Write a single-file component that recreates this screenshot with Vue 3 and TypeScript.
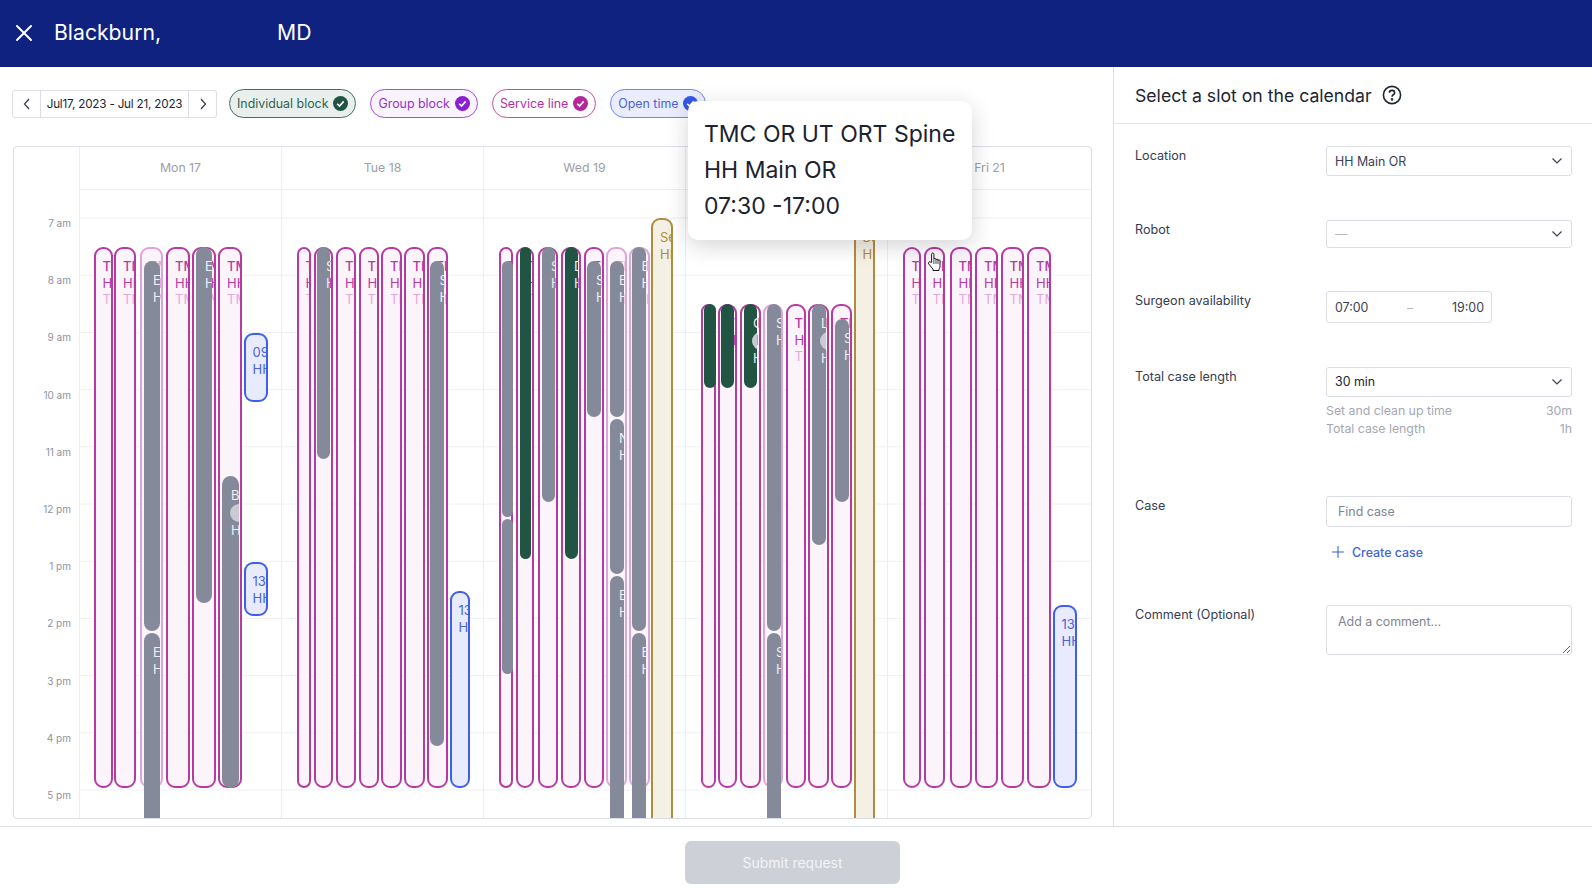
<script setup lang="ts">
type Kind = 'pink' | 'faded' | 'grey' | 'green' | 'blue' | 'tan'

interface CalEvent {
  kind: Kind
  x0: number
  x1: number
  y0: number
  y1: number
  lines: string[]
  avatar?: boolean
}

const TOP = 247
const END = 788
const BOTTOM = 830
const THU = 304
const BODY_Y = 217

const block = ['TMC OR UT ORT Spine', 'HH Main OR', 'TMC OR']

const pink = (x0: number, x1: number, y0 = TOP, kind: Kind = 'pink'): CalEvent => ({ kind, x0, x1, y0, y1: END, lines: block })
const faded = (x0: number, x1: number, y0 = TOP) => pink(x0, x1, y0, 'faded')
const grey = (name: string, x0: number, x1: number, y0: number, y1: number, avatar = false): CalEvent => ({
  kind: 'grey', x0, x1, y0, y1, lines: name ? [name, 'HH Main OR'] : [], avatar,
})
const green = (name: string, x0: number, x1: number, y0: number, y1: number, avatar = false): CalEvent => ({
  kind: 'green', x0, x1, y0, y1, lines: name ? [name, 'HH Main OR'] : [], avatar,
})
const blue = (x0: number, x1: number, y0: number, y1: number, time: string): CalEvent => ({ kind: 'blue', x0, x1, y0, y1, lines: [time, 'HH Main OR'] })
const tan = (x0: number, x1: number): CalEvent => ({ kind: 'tan', x0, x1, y0: 218, y1: BOTTOM, lines: ['Service line', 'HH Main OR'] })

const days: { label: string; x: number; events: CalEvent[] }[] = [
  {
    label: 'Mon 17',
    x: 79,
    events: [
      pink(93.5, 112.5), pink(114, 136), faded(140, 163), pink(166, 189.5), pink(192, 215.5), pink(218, 242),
      grey('Evans', 143.5, 160, 261, 631), grey('Evans', 143.5, 160, 633, BOTTOM), grey('Evans', 195.5, 212, TOP, 603), grey('Blackburn', 221.5, 238.5, 476, END, true),
      blue(243.5, 268, 333, 402, '09:00'), blue(243.5, 268, 562, 616, '13:00'),
    ],
  },
  {
    label: 'Tue 18',
    x: 281,
    events: [
      pink(296.5, 311), pink(313.5, 332.5), pink(336, 356), pink(358.5, 379), pink(381, 401.5), pink(403.5, 424.5), pink(426.5, 447.5),
      grey('Smith', 316.5, 329.5, TOP, 459), grey('Smith', 430, 444, 261, 746),
      blue(449.5, 470, 591, END, '13:00'),
    ],
  },
  {
    label: 'Wed 19',
    x: 483,
    events: [
      pink(498.5, 513), pink(516, 534), pink(538, 558), pink(561, 581), pink(583.5, 604), faded(606, 626.5), faded(628.5, 649.5),
      grey('', 501.5, 513, 261, 517), grey('', 501.5, 513, 519, 674),
      green('', 519.5, 531, TOP, 559), grey('Smith', 541.5, 555, TOP, 502), green('Davis', 564.5, 578, TOP, 559),
      grey('Smith', 586.5, 601, 261, 417), grey('Evans', 609.5, 623.5, 261, 417), grey('Nolan', 609.5, 623.5, 419, 574), grey('Evans', 609.5, 623.5, 576, BOTTOM),
      grey('Evans', 632, 646, TOP, 631), grey('Evans', 632, 646, 633, BOTTOM),
      tan(651, 672.5),
    ],
  },
  {
    label: 'Thu 20',
    x: 685,
    events: [
      pink(700.5, 715.5, THU), pink(717.5, 736.5, THU), pink(740, 760.5, THU), faded(763, 783, THU), pink(785.5, 806, THU), pink(808, 829, THU), pink(831, 852, THU),
      green('', 704, 715.5, THU, 388), green('', 721, 733.5, THU, 388), green('Carter', 743.5, 757, THU, 388, true),
      grey('Smith', 766.5, 780.5, THU, 631), grey('Smith', 766.5, 780.5, 633, BOTTOM), grey('Lee', 811.5, 826, THU, 545, true), grey('Smith', 834.5, 848.5, 319, 502),
      tan(853.5, 875),
    ],
  },
  {
    label: 'Fri 21',
    x: 887,
    events: [
      pink(902.5, 921), pink(923.5, 945), pink(949.5, 972), pink(975, 998), pink(1000.5, 1024), pink(1027, 1051),
      blue(1052.5, 1077, 605, END, '13:00'),
    ],
  },
]

const hours = ['7 am', '8 am', '9 am', '10 am', '11 am', '12 pm', '1 pm', '2 pm', '3 pm', '4 pm', '5 pm']

const filters = [
  { label: 'Individual block', cls: 'individual' },
  { label: 'Group block', cls: 'group' },
  { label: 'Service line', cls: 'service' },
  { label: 'Open time', cls: 'open' },
]

const eventStyle = (ev: CalEvent, dayX: number) => ({
  left: `${ev.x0 - dayX}px`,
  width: `${ev.x1 - ev.x0}px`,
  top: `${ev.y0 - BODY_Y}px`,
  height: `${ev.y1 - ev.y0}px`,
})
</script>

<template>
  <div class="app">
    <header class="topbar">
      <svg class="close" width="18" height="18" viewBox="0 0 18 18" fill="none" stroke="#fff" stroke-width="2" stroke-linecap="round">
        <path d="M2 2l14 14M16 2L2 16" />
      </svg>
      <span class="name">Blackburn,</span>
      <span class="name degree">MD</span>
    </header>

    <div class="main">
      <section class="left">
        <div class="toolbar">
          <div class="datenav">
            <button class="navbtn">
              <svg width="8" height="12" viewBox="0 0 8 12" fill="none" stroke="#3b4154" stroke-width="1.3"><path d="M6 1L1.5 6 6 11" /></svg>
            </button>
            <span class="range">Jul17, 2023 - Jul 21, 2023</span>
            <button class="navbtn">
              <svg width="8" height="12" viewBox="0 0 8 12" fill="none" stroke="#3b4154" stroke-width="1.3"><path d="M2 1l4.5 5L2 11" /></svg>
            </button>
          </div>
          <div v-for="f in filters" :key="f.label" class="pill" :class="f.cls">
            <span>{{ f.label }}</span>
            <svg class="check" width="15" height="15" viewBox="0 0 15 15">
              <circle cx="7.5" cy="7.5" r="7.5" fill="currentColor" />
              <path d="M4.2 7.7l2.3 2.3 4.2-4.6" fill="none" stroke="#fff" stroke-width="1.6" />
            </svg>
          </div>
        </div>

        <div class="calendar">
          <div class="cal-head">
            <div class="gutter"></div>
            <div v-for="d in days" :key="d.label" class="day-title">{{ d.label }}</div>
          </div>
          <div class="cal-allday">
            <div class="gutter"></div>
            <div v-for="d in days" :key="d.label" class="allday-cell"></div>
          </div>
          <div class="cal-body">
            <div class="times">
              <div v-for="h in hours" :key="h" class="time">{{ h }}</div>
            </div>
            <div v-for="d in days" :key="d.label" class="day">
              <div v-for="(ev, i) in d.events" :key="i" class="event" :class="ev.kind" :style="eventStyle(ev, d.x)">
                <div v-for="(line, n) in ev.lines" :key="n">
                  <span v-if="ev.avatar && n === 1" class="avatar"></span>
                  <span class="line">{{ line }}</span>
                </div>
              </div>
            </div>
          </div>
        </div>
      </section>

      <aside class="panel">
        <div class="panel-head">
          <h2>Select a slot on the calendar</h2>
          <svg width="20" height="20" viewBox="0 0 20 20" fill="none" stroke="#1d2433" stroke-width="1.6">
            <circle cx="10" cy="10" r="8.6" />
            <path d="M7.4 7.8c0-1.5 1.2-2.4 2.6-2.4s2.6.9 2.6 2.3c0 2.1-2.6 2-2.6 4" />
            <circle cx="10" cy="14.4" r=".5" fill="#1d2433" />
          </svg>
        </div>
        <div class="form">
          <div class="field">
            <label>Location</label>
            <div class="control select">
              <span>HH Main OR</span>
              <svg width="12" height="8" viewBox="0 0 12 8" fill="none" stroke="#3b4154" stroke-width="1.2"><path d="M1.5 1.5L6 6l4.5-4.5" /></svg>
            </div>
          </div>
          <div class="field">
            <label>Robot</label>
            <div class="control select robot">
              <span class="dash">—</span>
              <svg width="12" height="8" viewBox="0 0 12 8" fill="none" stroke="#3b4154" stroke-width="1.2"><path d="M1.5 1.5L6 6l4.5-4.5" /></svg>
            </div>
          </div>
          <div class="field">
            <label>Surgeon availability</label>
            <div class="control times-range">
              <span>07:00</span>
              <span class="dash">–</span>
              <span>19:00</span>
            </div>
          </div>
          <div class="field">
            <label>Total case length</label>
            <div>
              <div class="control select dark">
                <span>30 min</span>
                <svg width="12" height="8" viewBox="0 0 12 8" fill="none" stroke="#3b4154" stroke-width="1.2"><path d="M1.5 1.5L6 6l4.5-4.5" /></svg>
              </div>
              <div class="hints">
                <div class="hint"><span>Set and clean up time</span><span>30m</span></div>
                <div class="hint"><span>Total case length</span><span>1h</span></div>
              </div>
            </div>
          </div>
          <div class="field">
            <label>Case</label>
            <div>
              <input class="control text-input" placeholder="Find case" />
              <div class="create">
                <svg width="12" height="12" viewBox="0 0 12 12" fill="none" stroke="#3f63dc" stroke-width="1.1"><path d="M6 0v12M0 6h12" /></svg>
                <span>Create case</span>
              </div>
            </div>
          </div>
          <div class="field">
            <label>Comment (Optional)</label>
            <textarea class="control comment" placeholder="Add a comment..."></textarea>
          </div>
        </div>
      </aside>
    </div>

    <footer class="footer">
      <button class="submit" disabled>Submit request</button>
    </footer>

    <div class="tooltip">
      <div>TMC OR UT ORT Spine</div>
      <div>HH Main OR</div>
      <div>07:30 -17:00</div>
    </div>

    <svg class="cursor" width="16" height="20" viewBox="0 0 16 20">
      <path d="M4.6 10.5V2.2c0-1.6 2.3-1.6 2.3 0v5.2c0-1.3 2.1-1.3 2.1 0v.6c0-1.2 2-1.2 2 0v.6c0-1.1 2-1.1 2 .1v5.1c0 1.7-.5 2.5-1 3.4v1.3H6v-1.3L1.7 11.9c-1-1.500.8-2.900 2-1.700z" fill="#fff" stroke="#15171c" stroke-width="1" stroke-linejoin="round" />
      <path d="M6.9 8v4M9 8v4M11 8.500V12" stroke="#15171c" stroke-width=".8" fill="none" />
    </svg>
  </div>
</template>

<style>
html,
body {
  margin: 0;
  background: #fff;
}
</style>

<style scoped>
.app {
  position: relative;
  width: 1592px;
  height: 896px;
  overflow: hidden;
  display: flex;
  flex-direction: column;
  font-family: Inter, "Liberation Sans", sans-serif;
  color: #1d2433;
}

.topbar {
  height: 67px;
  flex: none;
  display: flex;
  align-items: center;
  background: #10227f;
  box-sizing: border-box;
  padding: 0 0 4px 15px;
}
.close {
  margin-right: 21px;
  position: relative;
  top: 1px;
}
.name {
  font-size: 21.2px;
  color: #fff;
}
.degree {
  margin-left: 116px;
}

.main {
  flex: none;
  height: 759px;
  display: flex;
}
.left {
  width: 1113px;
  box-sizing: border-box;
  padding: 22px 21px 0 13px;
  overflow: hidden;
}
.toolbar {
  display: flex;
  align-items: center;
  height: 29px;
  margin-left: -1px;
}
.datenav {
  display: flex;
  align-items: stretch;
  width: 205px;
  height: 28px;
  box-sizing: border-box;
  border: 1px solid #dcdde5;
  border-radius: 3px;
  margin-right: 12px;
}
.navbtn {
  width: 27px;
  padding: 0;
  border: 0;
  background: none;
  display: flex;
  align-items: center;
  justify-content: center;
}
.range {
  flex: 1;
  border-left: 1px solid #dcdde5;
  border-right: 1px solid #dcdde5;
  text-align: center;
  font-size: 11.7px;
  line-height: 26px;
  letter-spacing: -0.2px;
  white-space: nowrap;
  color: #1d2433;
}
.pill {
  display: flex;
  align-items: center;
  gap: 5px;
  height: 29px;
  box-sizing: border-box;
  padding: 0 7px;
  margin-right: 14px;
  border: 1.5px solid;
  border-radius: 15px;
  font-size: 12.4px;
  white-space: nowrap;
}
.pill.individual {
  border-color: #3a7460;
  background: #e8efec;
  color: #2f6350;
}
.pill.group {
  border-color: #a94bdc;
  background: #faf3fe;
  color: #9230cc;
}
.pill.service {
  border-color: #c04fa9;
  background: #fff;
  color: #b62f9f;
}
.pill.open {
  border-color: #7188ea;
  background: #e9edfd;
  color: #4a63dc;
}
.check {
  flex: none;
}
.pill.individual .check {
  color: #215443;
}
.pill.group .check {
  color: #8a1fd1;
}
.pill.service .check {
  color: #b5259c;
}
.pill.open .check {
  color: #3557e8;
}

.calendar {
  margin-top: 28px;
  width: 1079px;
  height: 673px;
  box-sizing: border-box;
  border: 1px solid #dcdde5;
  border-radius: 4px;
  overflow: hidden;
}
.cal-head,
.cal-allday,
.cal-body {
  display: grid;
  grid-template-columns: 65px repeat(4, 202px) 1fr;
}
.cal-head {
  height: 42px;
}
.day-title {
  border-left: 1px solid #eceef1;
  text-align: center;
  font-size: 12.3px;
  line-height: 42px;
  color: #9a9ea9;
}
.cal-allday {
  height: 28px;
}
.allday-cell {
  border-left: 1px solid #eceef1;
  border-top: 1px solid #eceef1;
}
.cal-body {
  height: 601px;
  overflow: hidden;
}
.time {
  height: 57.2px;
  box-sizing: border-box;
  padding: 1px 8px 0 0;
  text-align: right;
  font-size: 10px;
  line-height: 10px;
  color: #8e92a0;
}
.day {
  position: relative;
  box-sizing: border-box;
  border-left: 1px solid #eceef1;
  background-image: linear-gradient(#eff0f3 1px, transparent 1px);
  background-size: 100% 57.2px;
  background-position: 0 0.6px;
}
.event {
  position: absolute;
  box-sizing: border-box;
  overflow: hidden;
  padding: 9px 0 0 7px;
  margin-left: -1px;
  border: 2px solid;
  border-radius: 9px;
  font-size: 13px;
  line-height: 16.6px;
  white-space: nowrap;
}
.event.pink,
.event.faded {
  border-color: #b63aa2;
  background: #fbf4fb;
  color: #b63aa2;
}
.event.pink > div:first-child,
.event.faded > div:first-child {
  font-weight: 500;
}
.event.pink > div:nth-child(3),
.event.faded > div:nth-child(3) {
  color: #e3a9d8;
}
.event.faded {
  border-color: #e0a5d7;
  color: #e3a9d8;
}
.event.grey,
.event.green {
  border: 0;
  padding: 11px 0 0 9.5px;
  color: #eef0f4;
}
.event.grey {
  background: #858a9b;
}
.event.green {
  background: #215443;
}
.event.blue {
  border-color: #3f5fe8;
  background: #e7ebfd;
  color: #4a63dc;
}
.event.tan {
  border-color: #b08d3e;
  background: #f5f0e4;
  color: #b08d3e;
}
.avatar {
  display: block;
  width: 18px;
  height: 18px;
  margin: 0 0 0 -1px;
  border-radius: 50%;
  background: #c9cbd3;
}

.panel {
  width: 479px;
  box-sizing: border-box;
  border-left: 1px solid #dcdde5;
}
.panel-head {
  height: 57px;
  box-sizing: border-box;
  border-bottom: 1px solid #e4e5ec;
  padding-left: 21px;
  display: flex;
  align-items: center;
  gap: 10px;
}
.panel-head h2 {
  margin: 0;
  font-size: 17.65px;
  font-weight: 400;
  color: #1d2433;
}
.form {
  padding: 22px 20px 0 21px;
  display: flex;
  flex-direction: column;
  gap: 43.6px;
}
.field {
  display: grid;
  grid-template-columns: 191px 246px;
}
.field label {
  font-size: 12.6px;
  line-height: 18px;
  padding-top: 1px;
  color: #353c52;
}
.control {
  display: block;
  width: 100%;
  box-sizing: border-box;
  height: 30px;
  border: 1px solid #dcdde5;
  border-radius: 3px;
  padding: 0 8px;
  font-family: inherit;
  font-size: 12.4px;
  color: #3b4154;
  background: #fff;
}
.select {
  display: flex;
  align-items: center;
  justify-content: space-between;
}
.robot {
  height: 28px;
}
.dark {
  color: #1d2433;
}
.dash {
  color: #b7bac4;
}
.times-range {
  width: 166px;
  height: 32px;
  padding: 0 7px 0 8px;
  display: flex;
  align-items: center;
  justify-content: space-between;
}
.hints {
  margin-top: 5px;
  padding-bottom: 13px;
}
.hint {
  display: flex;
  justify-content: space-between;
  font-size: 12.3px;
  line-height: 18.7px;
  color: #a3a7b3;
}
.text-input {
  padding-left: 11px;
  height: 31px;
  outline: none;
}
.comment {
  height: 50px;
  padding: 8px 11px;
  outline: none;
}
.text-input::placeholder,
.comment::placeholder {
  color: #80858f;
  opacity: 1;
}
.create {
  margin-top: 16px;
  padding-left: 6px;
  display: flex;
  align-items: center;
  gap: 8px;
  height: 19px;
  font-size: 12.4px;
  font-weight: 500;
  color: #3f63dc;
}

.footer {
  flex: 1;
  border-top: 1px solid #dcdde5;
  display: flex;
  justify-content: center;
  padding: 14px 7px 0 0;
  box-sizing: border-box;
}
.submit {
  width: 215px;
  height: 43px;
  border: 0;
  border-radius: 6px;
  background: #cdd0d7;
  color: #f2f3f6;
  font-family: inherit;
  font-size: 14px;
}

.tooltip {
  position: absolute;
  left: 688px;
  top: 101px;
  width: 284px;
  height: 139px;
  box-sizing: border-box;
  padding: 15px 0 0 16px;
  background: #fff;
  border-radius: 10px;
  box-shadow: 0 6px 22px rgba(20, 24, 40, 0.18);
  font-size: 23px;
  line-height: 36px;
  color: #1d2230;
}
.cursor {
  position: absolute;
  left: 927px;
  top: 252px;
}
</style>
